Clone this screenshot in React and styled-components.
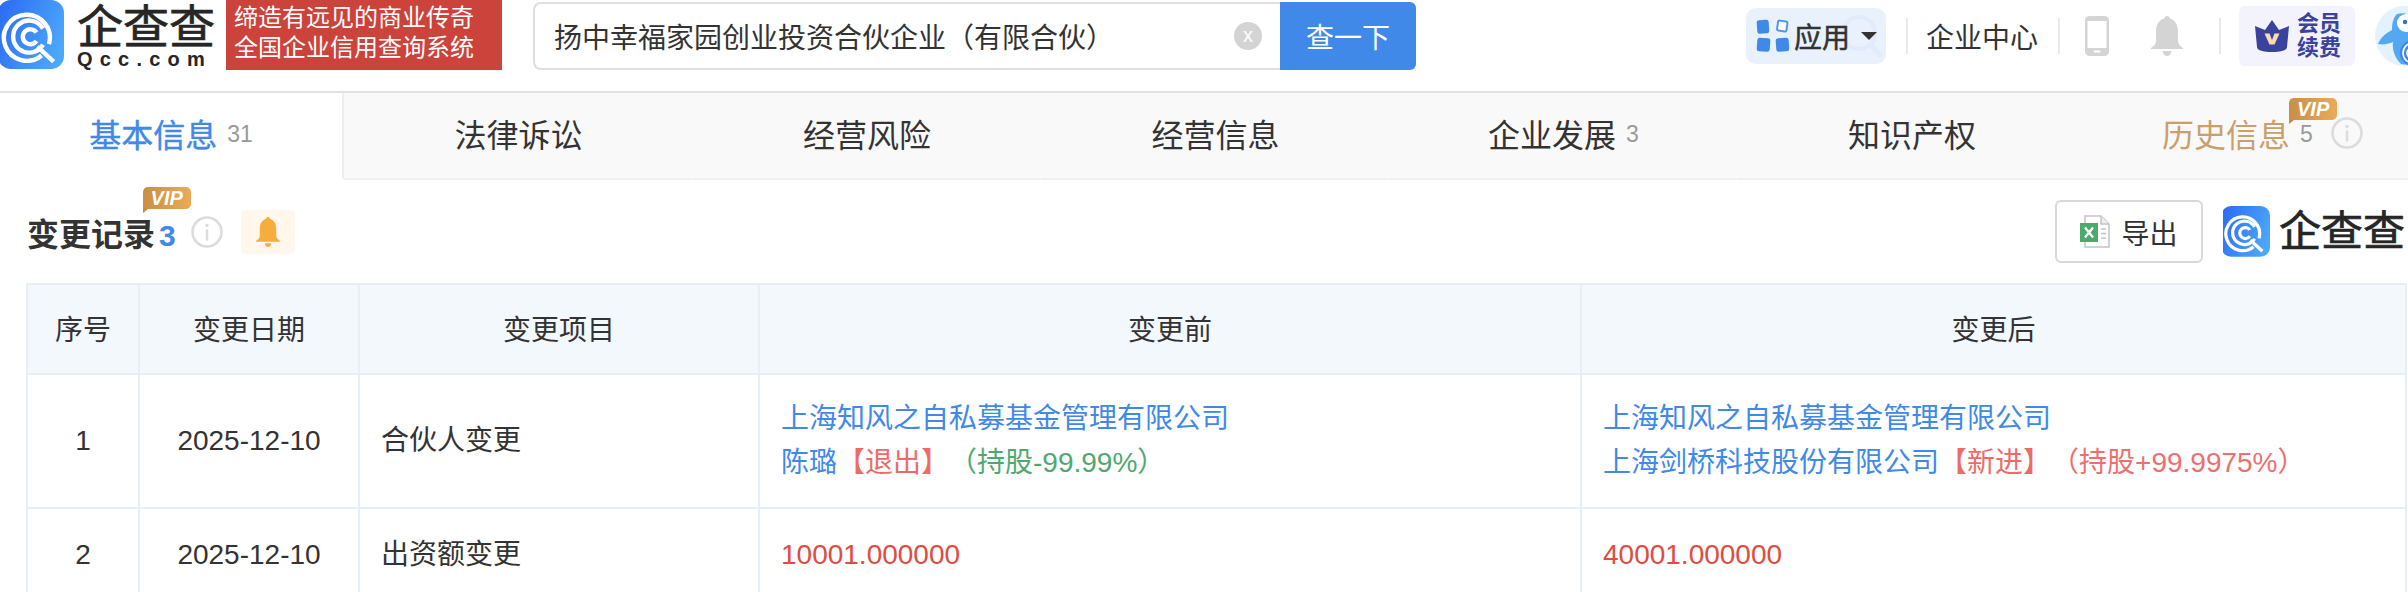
import React from "react";
import styled, { createGlobalStyle } from "styled-components";

const GlobalStyle = createGlobalStyle`
  html, body {
    margin: 0;
    padding: 0;
    background: #fff;
    overflow: hidden;
  }
  body {
    font-family: "Liberation Sans", "Noto Sans CJK SC", sans-serif;
    color: #333;
    text-spacing-trim: space-all;
  }
`;

const Page = styled.div`
  width: 2408px;
  height: 592px;
  overflow: hidden;
  background: #fff;
`;

/* top bar */
const TopBar = styled.header`
  height: 91px;
  display: flex;
  align-items: flex-start;
  overflow: hidden;
  box-sizing: content-box;
  border-bottom: 2px solid #e2e2e2;
  box-shadow: 0 2px 4px rgba(0, 0, 0, 0.04);
  & > * {
    flex-shrink: 0;
  }
`;

const LogoBox = styled.div`
  width: 216px;
  margin-right: 10px;
  display: flex;
  gap: 13px;
`;

const LogoWords = styled.div`
  padding-top: 5px;
  display: flex;
  flex-direction: column;
`;

const LogoTitle = styled.div`
  font-size: ${({ $size }) => $size}px;
  line-height: ${({ $size }) => $size - 2}px;
  color: #262626;
  white-space: nowrap;
  -webkit-text-stroke: 0.7px #262626;
`;

const LogoDomain = styled.div`
  font-size: 20px;
  line-height: 20px;
  font-weight: 700;
  letter-spacing: 7.2px;
  color: #262626;
  white-space: nowrap;
`;

const Slogan = styled.div`
  width: 276px;
  height: 70px;
  padding: 3px 0 0 8px;
  box-sizing: border-box;
  background: #cc433c;
  color: #fff;
  font-size: 24px;
  line-height: 30px;
`;

const SearchBox = styled.div`
  width: 747px;
  height: 68px;
  margin: 2px 0 0 31px;
  padding: 0 18px 0 19px;
  box-sizing: border-box;
  display: flex;
  align-items: center;
  justify-content: space-between;
  border: 2px solid #dedede;
  border-right: none;
  border-radius: 8px 0 0 8px;
  font-size: 28px;
  color: #333;
`;

const ClearDot = styled.span`
  width: 28px;
  height: 28px;
  border-radius: 50%;
  background: #d4d4d4;
  color: #fff;
  font-size: 20px;
  line-height: 26px;
  text-align: center;
`;

const SearchButton = styled.button`
  width: 136px;
  height: 68px;
  margin-top: 2px;
  padding: 0;
  border: none;
  border-radius: 0 6px 6px 0;
  background: #4089e8;
  color: #fff;
  font: inherit;
  font-size: 28px;
`;

const Nav = styled.nav`
  margin: 6px 0 0 330px;
  display: flex;
  align-items: center;
  height: 60px;
  & > * {
    flex-shrink: 0;
  }
`;

const AppChip = styled.div`
  position: relative;
  width: 140px;
  height: 56px;
  padding-left: 10px;
  box-sizing: border-box;
  display: flex;
  align-items: center;
  gap: 4px;
  border-radius: 10px;
  background: #e9f1fd;
`;

const ChipLabel = styled.span`
  position: relative;
  font-size: 28px;
  color: #333;
  -webkit-text-stroke: 0.5px #333;
`;

const ChipGlass = styled.svg`
  position: absolute;
  right: 3px;
  top: 6px;
`;

const Caret = styled.span`
  position: relative;
  margin-left: 7px;
  width: 0;
  height: 0;
  border-left: 8px solid transparent;
  border-right: 8px solid transparent;
  border-top: 8px solid #333;
`;

const NavLine = styled.span`
  width: 2px;
  height: 36px;
  margin: ${({ $margin }) => $margin};
  background: #e8e8e8;
`;

const NavText = styled.span`
  font-size: 28px;
  color: #333;
  white-space: nowrap;
`;

const NavIcons = styled.div`
  display: flex;
  align-items: center;
  gap: 42px;
`;

const RenewBox = styled.div`
  width: 116px;
  height: 60px;
  margin-left: 18px;
  padding-left: 16px;
  box-sizing: border-box;
  display: flex;
  align-items: center;
  gap: 8px;
  border-radius: 6px;
  background: #f2f3fd;
`;

const RenewText = styled.div`
  font-size: 22px;
  line-height: 24px;
  font-weight: 700;
  color: #3b429b;
`;

const Avatar = styled.svg`
  flex-shrink: 0;
  margin-left: 20px;
`;

/* tabs */
const TabRow = styled.div`
  display: flex;
  height: 87px;
  overflow: hidden;
`;

const Tab = styled.div`
  flex: 0 0 ${({ $width }) => $width}px;
  box-sizing: border-box;
  padding: 0 0 5px ${({ $active }) => ($active ? 0 : 3)}px;
  display: flex;
  align-items: center;
  justify-content: center;
  gap: 10px;
  font-size: 32px;
  background: ${({ $active }) => ($active ? "#fff" : "#f9f9f9")};
  border-right: 2px solid ${({ $active }) => ($active ? "#eee" : "#f9f9f9")};
  border-bottom: 2px solid ${({ $active }) => ($active ? "#fff" : "#efefef")};
  color: ${({ $active }) => ($active ? "#4089e8" : "#333")};
`;

const TabLabel = styled.span`
  position: relative;
  color: ${({ $gold }) => ($gold ? "#c9a06c" : "inherit")};
  -webkit-text-stroke: ${({ $active }) => ($active ? "0.4px #4089e8" : "0")};
`;

const TabCount = styled.span`
  padding-top: 3px;
  font-size: 23px;
  color: #999;
`;

const TabInfo = styled.span`
  display: flex;
  margin-left: 8px;
`;

const VipTag = styled.span`
  position: absolute;
  top: ${({ $top }) => $top}px;
  right: ${({ $right }) => $right}px;
  width: 48px;
  height: 22px;
  border-radius: 5px 5px 5px 0;
  background: linear-gradient(90deg, #c98f45, #e9ab58);
  color: #fff;
  font-size: 20px;
  line-height: 22px;
  font-weight: 700;
  font-style: italic;
  text-align: center;
  -webkit-text-stroke: 0;
  &::after {
    content: "";
    position: absolute;
    left: 0;
    bottom: -4px;
    border-top: 4px solid #c48a42;
    border-right: 5px solid transparent;
  }
`;

/* section */
const SectionHead = styled.div`
  height: 63px;
  margin: 20px 3px 20px 27px;
  display: flex;
  align-items: center;
`;

const SectionTitle = styled.h2`
  position: relative;
  margin: 0;
  font-size: 32px;
  font-weight: 700;
  color: #333;
  white-space: nowrap;
`;

const SectionCount = styled.span`
  margin-left: 4px;
  font-size: 30px;
  font-weight: 700;
  color: #4089e8;
`;

const SectionInfo = styled.span`
  display: flex;
  margin-left: 15px;
`;

const BellBadge = styled.span`
  width: 54px;
  height: 44px;
  margin-left: 18px;
  display: flex;
  align-items: center;
  justify-content: center;
  border-radius: 4px;
  background: #fff7ec;
`;

const ExportButton = styled.button`
  width: 148px;
  height: 63px;
  margin-left: auto;
  padding: 0;
  box-sizing: border-box;
  display: flex;
  align-items: center;
  justify-content: center;
  gap: 11px;
  border: 2px solid #d8d8d8;
  border-radius: 6px;
  background: #fff;
  color: #333;
  font: inherit;
  font-size: 28px;
`;

const SideLogo = styled.div`
  margin-left: 20px;
  display: flex;
  align-items: center;
  gap: 9px;
`;

/* table */
const TableWrap = styled.div`
  margin-left: 26px;
  width: 2379px;
`;

const Table = styled.table`
  width: 100%;
  table-layout: fixed;
  border-collapse: collapse;
  font-size: 28px;
  color: #333;
`;

const Th = styled.th`
  height: 85px;
  padding: 0 0 3px;
  border: 2px solid #e6eff8;
  background: #f3f8fd;
  font-weight: 400;
  text-align: center;
`;

const Td = styled.td`
  height: ${({ $tall }) => ($tall ? 132 : 92)}px;
  padding: 0 21px;
  border: 2px solid #e6eff8;
  line-height: 44px;
  text-align: ${({ $center }) => ($center ? "center" : "left")};
  white-space: nowrap;
`;

const Ink = styled.span`
  color: ${({ $tone }) =>
    ({
      link: "#4089e8",
      red: "#ee6a66",
      soft: "#ee6f6f",
      green: "#4fa96e",
      value: "#e04b42",
    })[$tone]};
`;

const Line = styled.div``;

const QccMark = ({ size }) => (
  <svg width={size} height={size * 1.08} viewBox="0 0 64 69" style={{ flexShrink: 0 }}>
    <defs>
      <linearGradient id={`qcc${size}`} x1="0" x2="1" y1="0.2" y2="0.6">
        <stop offset="0" stopColor="#2d6cf5" />
        <stop offset="1" stopColor="#4ba8fb" />
      </linearGradient>
    </defs>
    <rect x="-2" width="66" height="69" rx="13" fill={`url(#qcc${size})`} />
    <g fill="none" stroke="#fff" strokeWidth="4.4">
      <path d="M41.6 55.4A23 23 0 1 1 49 44" />
      <path d="M43 28.5A16 16 0 1 0 43 44.5" />
      <path d="M36.5 32.5A7.5 7.5 0 1 0 36.5 41" />
      <path d="M39 48L52 60" strokeLinecap="square" />
    </g>
  </svg>
);

const InfoIcon = () => (
  <svg width="32" height="32" viewBox="0 0 32 32">
    <circle cx="16" cy="16" r="14.5" fill="none" stroke="#dcdcdc" strokeWidth="2.6" />
    <circle cx="16" cy="9.5" r="1.7" fill="#dcdcdc" />
    <rect x="14.8" y="13.5" width="2.4" height="11" fill="#dcdcdc" />
  </svg>
);

const BellIcon = ({ color, width, height }) => (
  <svg width={width} height={height} viewBox="0 0 32 40">
    <path
      d="M16 0c1.6 0 2.6 1.1 2.8 2.6C24.6 4.200 27 9.500 27 16v9c0 3 2 5 5 7v1H0v-1c3-2 5-4 5-7v-9C5 9.500 7.400 4.200 13.200 2.600 13.400 1.100 14.400 0 16 0z"
      fill={color}
    />
    <path d="M11.500 35h9c-.6 3-2.300 5-4.500 5s-3.900-2-4.500-5z" fill={color} />
  </svg>
);

const AppsIcon = () => (
  <svg width="34" height="34" viewBox="0 0 34 34">
    <rect x="1" y="1" width="12" height="13.500" rx="2.500" fill="#3f8ae8" transform="rotate(-4 7 8)" />
    <rect x="21.500" y="2" width="9.500" height="10" rx="1.500" fill="#fff" stroke="#4f95ec" strokeWidth="2" transform="rotate(8 26 7)" />
    <rect x="1" y="19" width="13" height="13.500" rx="2.500" fill="#3f8ae8" transform="rotate(4 7 26)" />
    <rect x="20" y="19" width="13" height="13.500" rx="2.500" fill="#3f8ae8" transform="rotate(-4 26 26)" />
  </svg>
);

const PhoneIcon = () => (
  <svg width="24" height="40" viewBox="0 0 24 40">
    <rect width="24" height="40" rx="4.500" fill="#d4d4d4" />
    <rect x="2.500" y="5" width="19" height="27" fill="#fff" />
    <rect x="8.500" y="34.500" width="7" height="2" rx="1" fill="#fff" />
  </svg>
);

const CrownIcon = () => (
  <svg width="34" height="32" viewBox="0 0 34 32" style={{ flexShrink: 0 }}>
    <path
      d="M17 0l7 10 10-4-2 21c-.2 2-1.500 3-3.500 3.500-3.500 1-7.500 1.500-11.500 1.500s-8-.5-11.500-1.500C3.500 30 2.200 29 2 27L0 6l10 4z"
      fill="#3b429b"
    />
    <path d="M9.500 13.500h5l2.500 6.500 2.500-6.500h5L19.500 24.500h-5z" fill="#f6dcae" />
  </svg>
);

const ExcelIcon = () => (
  <svg width="30" height="33" viewBox="0 0 30 33">
    <path d="M5 1h16l8 8v23H5z" fill="#fff" stroke="#c4c4c4" strokeWidth="1.500" />
    <path d="M21 1v8h8" fill="#eee" stroke="#c4c4c4" strokeWidth="1.500" />
    <path d="M21 14h5M21 18.500h5M21 23h5" stroke="#c4c4c4" strokeWidth="1.500" />
    <rect y="8" width="18" height="19" fill="#4caa6c" />
    <path d="M5 12.500l8 10M13 12.500l-8 10" stroke="#fff" strokeWidth="2.400" />
  </svg>
);

const PenguinAvatar = () => (
  <Avatar width="60" height="60" viewBox="0 0 60 60">
    <circle cx="30" cy="30" r="30" fill="#e4f2fe" />
    <path d="M22 8c11-3 20 4 21 15 6 6 9 14 8 25-5 8-14 12-25 10C20 52 17 44 18 36c-5 2-10 3-15 2 3-7 8-11 14-14 0-6 1-12 5-16z" fill="#54a8f2" />
    <circle cx="31" cy="17" r="9" fill="#fff" />
    <circle cx="30" cy="16" r="2.200" fill="#2f6fd0" />
    <g fill="none" stroke="#3f8ae8" strokeWidth="2.400">
      <circle cx="38" cy="47" r="12" fill="#fff" />
      <circle cx="38" cy="47" r="8" />
      <circle cx="38" cy="47" r="4" />
    </g>
  </Avatar>
);

const tabs = [
  { label: "法律诉讼", width: 348 },
  { label: "经营风险", width: 349 },
  { label: "经营信息", width: 348 },
  { label: "企业发展", count: 3, width: 348 },
  { label: "知识产权", width: 349 },
];

export default function App() {
  return (
    <Page>
      <GlobalStyle />
      <TopBar>
        <LogoBox>
          <QccMark size={64} />
          <LogoWords>
            <LogoTitle $size={46}>企查查</LogoTitle>
            <LogoDomain>Qcc.com</LogoDomain>
          </LogoWords>
        </LogoBox>
        <Slogan>
          缔造有远见的商业传奇
          <br />
          全国企业信用查询系统
        </Slogan>
        <SearchBox>
          <span>扬中幸福家园创业投资合伙企业（有限合伙）</span>
          <ClearDot>x</ClearDot>
        </SearchBox>
        <SearchButton>查一下</SearchButton>
        <Nav>
          <AppChip>
            <ChipGlass width="44" height="48" viewBox="0 0 44 48">
              <circle cx="20" cy="19" r="16" fill="none" stroke="#e1ebfb" strokeWidth="4" />
              <path d="M32 31l9 10" stroke="#e1ebfb" strokeWidth="5" strokeLinecap="round" />
            </ChipGlass>
            <AppsIcon />
            <ChipLabel>应用</ChipLabel>
            <Caret />
          </AppChip>
          <NavLine $margin="0 18px 0 20px" />
          <NavText>企业中心</NavText>
          <NavLine $margin="0 25px 0 20px" />
          <NavIcons>
            <PhoneIcon />
            <BellIcon color="#d4d4d4" width={32} height={40} />
          </NavIcons>
          <NavLine $margin="0 0 0 36px" />
          <RenewBox>
            <CrownIcon />
            <RenewText>
              会员
              <br />
              续费
            </RenewText>
          </RenewBox>
          <PenguinAvatar />
        </Nav>
      </TopBar>

      <TabRow>
        <Tab $active $width={344}>
          <TabLabel $active>基本信息</TabLabel>
          <TabCount>31</TabCount>
        </Tab>
        {tabs.map((tab) => (
          <Tab key={tab.label} $width={tab.width}>
            <TabLabel>{tab.label}</TabLabel>
            {tab.count && <TabCount>{tab.count}</TabCount>}
          </Tab>
        ))}
        <Tab $width={352}>
          <TabLabel $gold>
            历史信息
            <VipTag $top={-12} $right={-47}>VIP</VipTag>
          </TabLabel>
          <TabCount>5</TabCount>
          <TabInfo>
            <InfoIcon />
          </TabInfo>
        </Tab>
      </TabRow>

      <SectionHead>
        <SectionTitle>
          变更记录
          <VipTag $top={-22} $right={-15}>VIP</VipTag>
          <SectionCount>3</SectionCount>
        </SectionTitle>
        <SectionInfo>
          <InfoIcon />
        </SectionInfo>
        <BellBadge>
          <BellIcon color="#f5ad3d" width={24} height={30} />
        </BellBadge>
        <ExportButton>
          <ExcelIcon />
          导出
        </ExportButton>
        <SideLogo>
          <QccMark size={47} />
          <LogoTitle $size={42}>企查查</LogoTitle>
        </SideLogo>
      </SectionHead>

      <TableWrap>
        <Table>
          <colgroup>
            <col style={{ width: 112 }} />
            <col style={{ width: 220 }} />
            <col style={{ width: 400 }} />
            <col style={{ width: 822 }} />
            <col style={{ width: 825 }} />
          </colgroup>
          <thead>
            <tr>
              <Th>序号</Th>
              <Th>变更日期</Th>
              <Th>变更项目</Th>
              <Th>变更前</Th>
              <Th>变更后</Th>
            </tr>
          </thead>
          <tbody>
            <tr>
              <Td $tall $center>1</Td>
              <Td $tall $center>2025-12-10</Td>
              <Td $tall>合伙人变更</Td>
              <Td $tall>
                <Line><Ink $tone="link">上海知风之自私募基金管理有限公司</Ink></Line>
                <Line>
                  <Ink $tone="link">陈璐</Ink>
                  <Ink $tone="red">【退出】</Ink>
                  <Ink $tone="green">（持股-99.99%）</Ink>
                </Line>
              </Td>
              <Td $tall>
                <Line><Ink $tone="link">上海知风之自私募基金管理有限公司</Ink></Line>
                <Line>
                  <Ink $tone="link">上海剑桥科技股份有限公司</Ink>
                  <Ink $tone="red">【新进】</Ink>
                  <Ink $tone="soft">（持股+99.9975%）</Ink>
                </Line>
              </Td>
            </tr>
            <tr>
              <Td $center>2</Td>
              <Td $center>2025-12-10</Td>
              <Td>出资额变更</Td>
              <Td><Ink $tone="value">10001.000000</Ink></Td>
              <Td><Ink $tone="value">40001.000000</Ink></Td>
            </tr>
          </tbody>
        </Table>
      </TableWrap>
    </Page>
  );
}
